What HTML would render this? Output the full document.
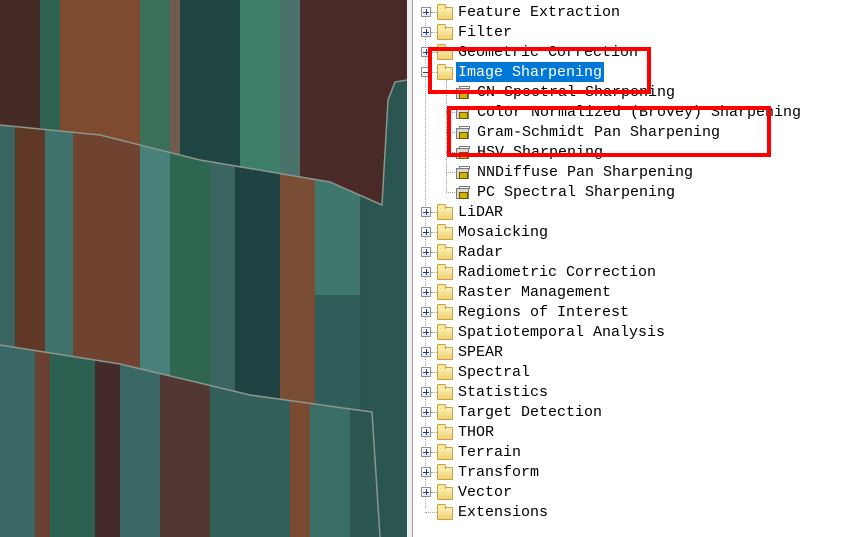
<!DOCTYPE html>
<html><head><meta charset="utf-8"><style>
*{margin:0;padding:0;box-sizing:border-box}
body{width:844px;height:537px;overflow:hidden;background:#fff;position:relative;font-family:"Liberation Mono","Noto Sans CJK SC",monospace}
#img{position:absolute;left:0;top:0;width:407px;height:537px}
#sep{position:absolute;left:407px;top:0;width:5px;height:537px;background:#f0f0f0}
#sep2{position:absolute;left:412px;top:0;width:1px;height:537px;background:#a0a0a0}
.row{position:absolute;height:20px;line-height:21px;font-size:15px;color:#000;white-space:pre}
.exp{position:absolute;width:10px;height:10px;border:1px solid #919191;background:linear-gradient(#fff,#e8e8e8)}
.exp:before{content:"";position:absolute;left:1px;top:3.5px;width:6px;height:1px;background:#1e3c8c}
.exp.p:after{content:"";position:absolute;left:3.5px;top:1px;width:1px;height:6px;background:#1e3c8c}
.fold{position:absolute;width:16px;height:13px;border:1px solid #c8a040;border-radius:1px;background:linear-gradient(#fdf0b8,#f0d070)}
.fold:before{content:"";position:absolute;left:-1px;top:-4px;width:7px;height:4px;border:1px solid #c8a040;border-bottom:none;background:#fbe9a0;border-radius:2px 2px 0 0}
.tool{position:absolute;width:13px;height:11px;border:1px solid #7a7a7a;background:#d8d8d8}
.tool:after{content:"";position:absolute;left:2px;top:3px;width:7px;height:5px;background:#d4b000;border:1px solid #6a5a00}
.tool:before{content:"";position:absolute;left:2px;top:-3px;width:9px;height:2px;border:1px solid #7a7a7a;border-bottom:none}
.dv{position:absolute;border-left:1px dotted #a0a0a0;width:0}
.dh{position:absolute;border-top:1px dotted #a0a0a0;height:0}
.red{position:absolute;border:4px solid #ff0000}
</style></head><body>
<svg id="img" viewBox="0 0 407 537" xmlns="http://www.w3.org/2000/svg">
<defs>
<clipPath id="cm"><polygon points="0,0 407,0 407,537 380,537 372,412 250,395 120,364 0,345"/></clipPath>
<clipPath id="ct"><polygon points="0,0 407,0 407,80 395,82 388,100 382,205 330,182 200,160 100,135 0,125"/></clipPath>
</defs>
<g>
<rect x="0" y="0" width="407" height="537" fill="#2b5550"/>
<rect x="0" y="0" width="35" height="537" fill="#3a6866"/>
<rect x="35" y="0" width="15" height="537" fill="#6a4030"/>
<rect x="50" y="0" width="45" height="537" fill="#2c6050"/>
<rect x="95" y="0" width="25" height="537" fill="#452a2a"/>
<rect x="120" y="0" width="40" height="537" fill="#3a6866"/>
<rect x="160" y="0" width="50" height="537" fill="#523835"/>
<rect x="210" y="0" width="80" height="537" fill="#336058"/>
<rect x="290" y="0" width="20" height="537" fill="#7a4a30"/>
<rect x="310" y="0" width="40" height="537" fill="#3a6e64"/>
<rect x="350" y="0" width="57" height="537" fill="#2d5650"/>
</g>
<g clip-path="url(#cm)">
<rect x="0" y="0" width="407" height="537" fill="#2d5650"/>
<rect x="0" y="0" width="15" height="537" fill="#3a6460"/>
<rect x="15" y="0" width="30" height="537" fill="#603828"/>
<rect x="45" y="0" width="28" height="537" fill="#3f726a"/>
<rect x="73" y="0" width="67" height="537" fill="#704330"/>
<rect x="140" y="0" width="30" height="537" fill="#48807a"/>
<rect x="170" y="0" width="40" height="537" fill="#2f6650"/>
<rect x="210" y="0" width="25" height="537" fill="#3a6460"/>
<rect x="235" y="0" width="45" height="537" fill="#1f4242"/>
<rect x="280" y="0" width="35" height="537" fill="#7a4e35"/>
<rect x="315" y="0" width="45" height="537" fill="#3f766e"/>
<rect x="315" y="295" width="45" height="120" fill="#2f5e5a"/>
<rect x="362" y="0" width="45" height="537" fill="#2a5550"/>
</g>
<g clip-path="url(#ct)">
<rect x="0" y="0" width="407" height="537" fill="#4a2a28"/>
<rect x="0" y="0" width="40" height="537" fill="#462a25"/>
<rect x="40" y="0" width="20" height="537" fill="#2f6250"/>
<rect x="60" y="0" width="80" height="537" fill="#7e4a30"/>
<rect x="140" y="0" width="30" height="537" fill="#3a7058"/>
<rect x="170" y="0" width="10" height="537" fill="#6e5a4e"/>
<rect x="180" y="0" width="60" height="537" fill="#1f4542"/>
<rect x="240" y="0" width="40" height="537" fill="#3d7e68"/>
<rect x="280" y="0" width="20" height="537" fill="#4a726a"/>
<rect x="300" y="0" width="90" height="537" fill="#4a2a28"/>
</g>
<polyline points="0,125 100,135 200,160 330,182 382,205 388,100 395,82 407,80" fill="none" stroke="#8a968c" stroke-width="1.5"/>
<polyline points="0,345 120,364 250,395 372,412 380,537" fill="none" stroke="#8a968c" stroke-width="1.5"/>
</svg>
<div id="sep"></div><div id="sep2"></div>

<div class="dv" style="left:425px;top:8px;height:500px"></div>
<div class="dv" style="left:446px;top:80px;height:112px"></div>
<div class="dh" style="left:425px;top:512px;width:12px"></div>

<div id="tree"></div>
<div class="red" style="left:428px;top:47px;width:223px;height:47px"></div>
<div class="red" style="left:447px;top:106px;width:324px;height:51px"></div>
<script>
var items=[["Feature Extraction",1],["Filter",1],["Geometric Correction",1],["Image Sharpening",2],
["CN Spectral Sharpening",3],["Color Normalized (Brovey) Sharpening",3],["Gram-Schmidt Pan Sharpening",3],["HSV Sharpening",3],["NNDiffuse Pan Sharpening",3],["PC Spectral Sharpening",3],
["LiDAR",1],["Mosaicking",1],["Radar",1],["Radiometric Correction",1],["Raster Management",1],["Regions of Interest",1],["Spatiotemporal Analysis",1],["SPEAR",1],["Spectral",1],["Statistics",1],["Target Detection",1],["THOR",1],["Terrain",1],["Transform",1],["Vector",1],["Extensions",0]];
var h="";
items.forEach(function(it,i){
 var c=12+20*i;
 if(it[1]==3){
  h+='<div class="dh" style="left:446px;top:'+c+'px;width:9px"></div>';
  h+='<div class="tool" style="left:456px;top:'+(c-4)+'px"></div>';
  h+='<div class="row" style="left:477px;top:'+(c-10)+'px">'+it[0]+'</div>';
 }else{
  if(it[1]>0){h+='<div class="dh" style="left:431px;top:'+c+'px;width:6px"></div>';
   h+='<div class="exp'+(it[1]==1?' p':'')+'" style="left:421px;top:'+(c-5)+'px"></div>';}
  h+='<div class="fold" style="left:437px;top:'+(c-5)+'px"></div>';
  if(it[1]==2) h+='<div style="position:absolute;left:456px;top:'+(c-10)+'px;width:148px;height:20px;background:#0078d7"></div>';
  h+='<div class="row" style="left:458px;top:'+(c-10)+'px;'+(it[1]==2?'color:#fff':'')+'">'+it[0]+'</div>';
 }
});
document.getElementById("tree").innerHTML=h;
</script>
</body></html>
